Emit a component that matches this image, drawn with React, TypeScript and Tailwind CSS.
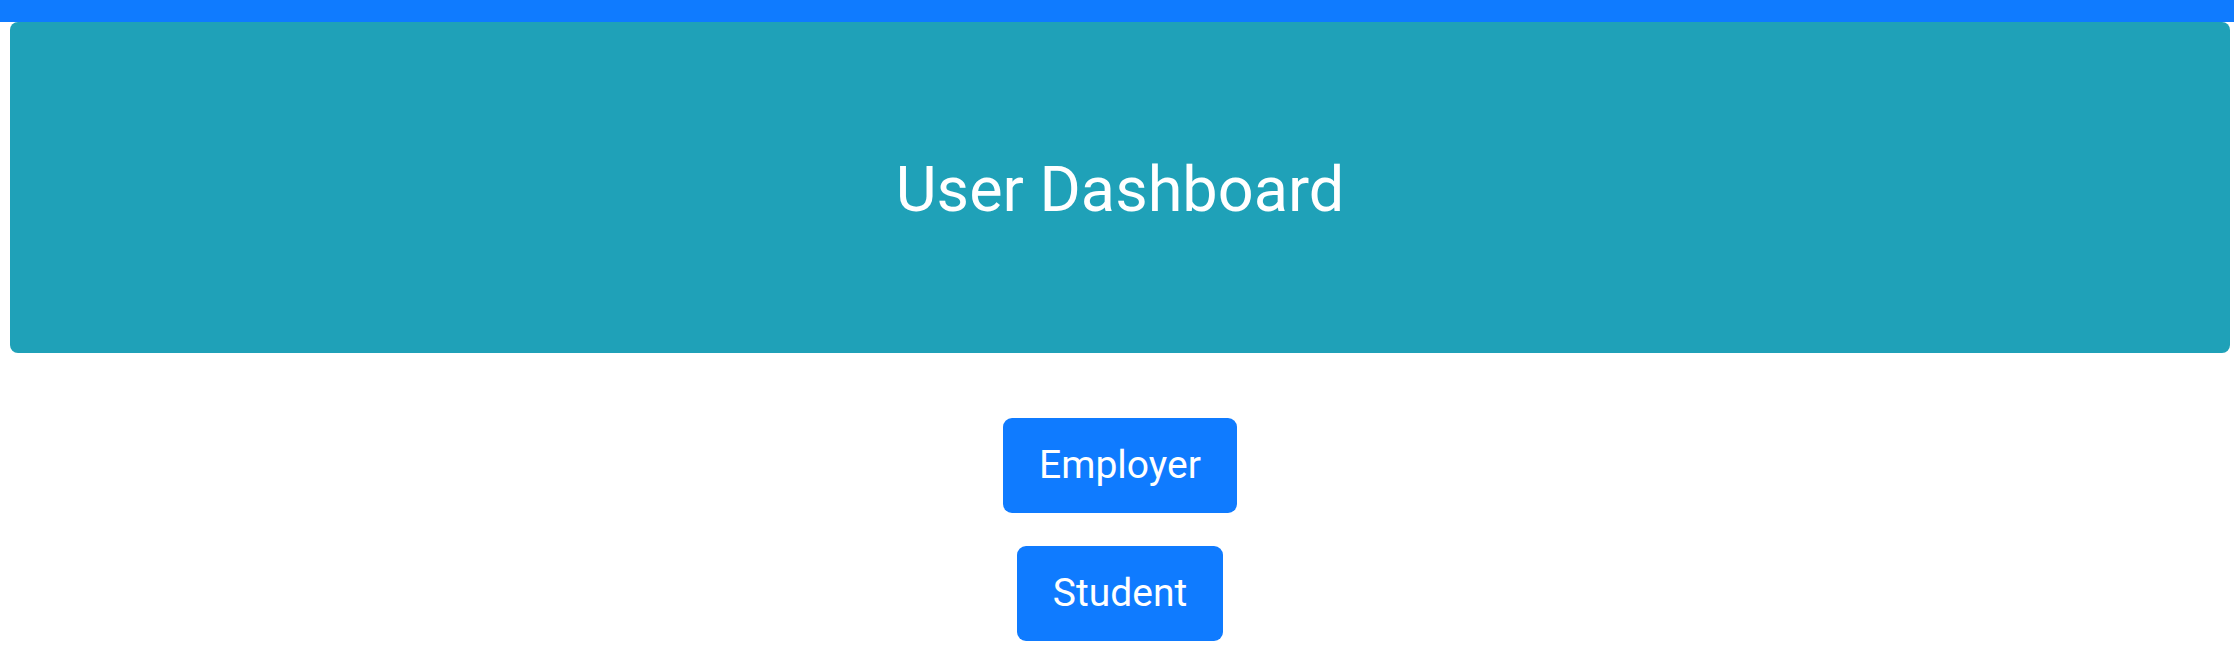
export default function App() {
  return (
    <div className="min-h-screen bg-white" style={{ fontFamily: 'Roboto, "Liberation Sans", Arial, sans-serif' }}>
      <div className="h-[22px] bg-[#0f7bff]" />
      <div className="ml-[10px] mr-[4px]">
        <div className="flex h-[331px] items-center justify-center rounded-[8px] bg-[#1fa1b8]">
          <h1 className="pt-[4px] text-[63px] leading-none font-normal text-white">User Dashboard</h1>
        </div>
        <div className="mt-[65px] flex flex-col items-center gap-[33px]">
          <button className="flex h-[95px] items-center rounded-[9px] bg-[#0f7bff] px-[36px] text-[39px] text-white">
            Employer
          </button>
          <button className="flex h-[95px] items-center rounded-[9px] bg-[#0f7bff] px-[36px] text-[39px] text-white">
            Student
          </button>
        </div>
      </div>
    </div>
  );
}
